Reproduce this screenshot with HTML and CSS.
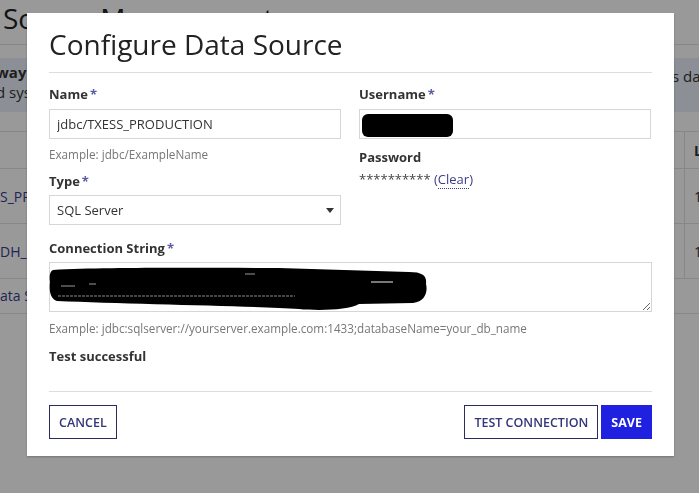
FILE: index.html
```html
<!DOCTYPE html>
<html lang="en">
<head>
    <meta charset="UTF-8">
    <meta name="viewport" content="width=device-width, initial-scale=1.0">
    <title>Source Management</title>
    <link rel="stylesheet" href="styles.css">
</head>
<body>
    <div class="page">
        <h1 class="page-title">Source Management</h1>
        <div class="banner">
            <div class="banner-left">
                <div class="banner-line"><b>way to manage connections</b></div>
                <div class="banner-line">d systems used by reports</div>
            </div>
            <div class="banner-right">s database</div>
        </div>
        <div class="bg-table">
            <div class="bg-row bg-head">
                <div class="bg-cell"></div>
                <div class="bg-cell bg-side">Last</div>
            </div>
            <div class="bg-row">
                <div class="bg-cell bg-link">S_PRODUCTION</div>
                <div class="bg-cell bg-side">12/01</div>
            </div>
            <div class="bg-row">
                <div class="bg-cell bg-link">DH_PROD</div>
                <div class="bg-cell bg-side">11/14</div>
            </div>
        </div>
        <div class="bg-add">ata Source</div>
    </div>

    <div class="overlay">
        <div class="modal">
            <h2 class="modal-title">Configure Data Source</h2>

            <div class="form">
                <div class="form-cols">
                    <div class="col">
                        <label class="label">Name<span class="req">*</span></label>
                        <input class="field" type="text" value="jdbc/TXESS_PRODUCTION">
                        <div class="hint">Example: jdbc/ExampleName</div>

                        <label class="label label-gap">Type<span class="req">*</span></label>
                        <div class="select-wrap">
                            <select class="field select">
                                <option>SQL Server</option>
                            </select>
                        </div>
                    </div>
                    <div class="col">
                        <label class="label">Username<span class="req">*</span></label>
                        <div class="redact-wrap">
                            <input class="field" type="text" value="">
                            <div class="blob-user"></div>
                        </div>

                        <div class="label pw-label">Password</div>
                        <div class="pw-value">********** <span class="clear-link">(<span class="dotted">Clear</span>)</span></div>
                    </div>
                </div>

                <label class="label conn-label">Connection String<span class="req">*</span></label>
                <div class="redact-wrap">
                    <textarea class="field textarea"></textarea>
                    <svg class="blob-conn" width="380" height="48" viewBox="0 0 380 48">
                        <path d="M4 4 C60 1 150 2 230 2 L360 6 C374 6 378 10 377 18 C379 26 376 36 364 37 L310 38 C300 44 270 45 250 43 C200 40 80 38 8 35 C1 33 0 24 1 16 C0 10 1 5 4 4 Z" fill="#000"/>
                        <path d="M9 30 L246 30" stroke="#8a8a8a" stroke-width="1" stroke-dasharray="3 1"/>
                        <path d="M12 20 L26 20 M40 18 L47 18 M196 8 L206 8" stroke="#9a9a9a" stroke-width="1.2"/>
                        <path d="M322 16 L344 16" stroke="#777" stroke-width="2"/>
                    </svg>
                </div>
                <div class="hint">Example: jdbc:sqlserver://yourserver.example.com:1433;databaseName=your_db_name</div>

                <div class="status">Test successful</div>
            </div>

            <div class="modal-footer">
                <button class="btn btn-outline">CANCEL</button>
                <div class="spacer"></div>
                <button class="btn btn-outline">TEST CONNECTION</button>
                <button class="btn btn-primary">SAVE</button>
            </div>
        </div>
    </div>
</body>
</html>
```

FILE: styles.css
```css
body {
    margin: 0;
    font-family: 'Open Sans', 'Noto Sans', sans-serif;
    color: #333;
    background-color: white;
    overflow: hidden;
}

/* page behind the dialog */
.page {
    width: 699px;
    height: 493px;
    overflow: hidden;
}
.page-title {
    margin: 0;
    padding: 1px 3px 9px;
    font-size: 28px;
    line-height: 34px;
    font-weight: 400;
    color: #222;
    border-bottom: 1px solid #e2e2e2;
}
.banner {
    display: flex;
    margin-top: 13px;
    padding: 4px 0 10px;
    background-color: #eaf0fa;
    font-size: 15px;
}
.banner-left {
    flex: none;
    width: 676px;
    margin-left: -4px;
    white-space: nowrap;
}
.banner-line {
    line-height: 20px;
}
.banner-right {
    padding-top: 4px;
    white-space: nowrap;
}
.bg-table {
    margin-top: 19px;
    border-top: 1px solid #e2e2e2;
}
.bg-row {
    display: grid;
    grid-template-columns: 684px 1fr;
    height: 54px;
    border-bottom: 1px solid #e2e2e2;
    font-size: 14px;
}
.bg-head {
    height: 36px;
    font-weight: 700;
}
.bg-cell {
    display: flex;
    align-items: center;
    white-space: nowrap;
    overflow: hidden;
}
.bg-side {
    padding-left: 9px;
    border-left: 1px solid #e2e2e2;
}
.bg-link {
    color: #3b3b8f;
}
.bg-add {
    height: 34px;
    line-height: 34px;
    font-size: 14px;
    color: #3b3b8f;
    border-bottom: 1px solid #e2e2e2;
}

/* dialog */
.overlay {
    position: fixed;
    top: 0;
    left: 0;
    right: 0;
    bottom: 0;
    background-color: rgba(0, 0, 0, 0.4);
}
.modal {
    box-sizing: border-box;
    width: 647px;
    margin: 13px 0 0 27px;
    padding: 12px 22px 17px;
    background-color: white;
    box-shadow: 0 1px 2px rgba(0, 0, 0, 0.25);
}
.modal-title {
    margin: 0;
    padding-bottom: 9px;
    font-size: 28px;
    line-height: 38px;
    font-weight: 400;
    color: #222;
    border-bottom: 1px solid #ddd;
}
.form {
    padding-top: 12px;
}
.form-cols {
    display: grid;
    grid-template-columns: 292px 292px;
    column-gap: 18px;
}
.col {
    display: flex;
    flex-direction: column;
}
.label {
    display: block;
    margin-bottom: 6px;
    font-size: 13px;
    line-height: 18px;
    font-weight: 700;
    color: #333;
}
.req {
    margin-left: 2px;
    color: #5a5aa6;
}
.label-gap {
    margin-top: 10px;
    margin-bottom: 5px;
}
.field {
    box-sizing: border-box;
    display: block;
    width: 100%;
    height: 30px;
    margin: 0;
    padding: 0 7px;
    border: 1px solid #d6d6d6;
    border-radius: 0;
    background-color: white;
    font-family: inherit;
    font-size: 13px;
    color: #333;
    outline: none;
}
.hint {
    margin-top: 7px;
    font-size: 11.7px;
    line-height: 16px;
    color: #777;
}
.select-wrap {
    position: relative;
}
.select {
    appearance: none;
    -webkit-appearance: none;
}
.select-wrap::after {
    content: "";
    position: absolute;
    right: 7px;
    top: 13px;
    border-left: 4px solid transparent;
    border-right: 4px solid transparent;
    border-top: 5px solid #333;
}
.redact-wrap {
    position: relative;
}
.blob-user {
    position: absolute;
    left: 3px;
    top: 5px;
    width: 91px;
    height: 23px;
    background-color: #000;
    border-radius: 6px;
}
.pw-label {
    margin-top: 9px;
    margin-bottom: 4px;
}
.pw-value {
    font-size: 13px;
    line-height: 18px;
    color: #444;
}
.clear-link {
    color: #3b3b86;
}
.dotted {
    border-bottom: 1px dotted #3b3b86;
}
.conn-label {
    margin-top: 14px;
    margin-bottom: 5px;
}
.textarea {
    height: 50px;
    padding: 6px 7px;
    resize: vertical;
}
.blob-conn {
    position: absolute;
    left: 0;
    top: 4px;
}
.redact-wrap + .hint {
    margin-top: 8px;
}
.status {
    margin-top: 11px;
    font-size: 13px;
    line-height: 18px;
    font-weight: 700;
    color: #333;
}
.modal-footer {
    display: flex;
    gap: 3px;
    margin-top: 26px;
    padding-top: 13px;
    border-top: 1px solid #ddd;
}
.spacer {
    flex: 1;
}
.btn {
    height: 34px;
    padding: 0 9px;
    font-family: inherit;
    font-size: 12.5px;
    font-weight: 600;
    border-radius: 0;
    cursor: pointer;
}
.btn-outline {
    background-color: white;
    color: #35357a;
    border: 1px solid #2b2b5e;
}
.btn-primary {
    background-color: #2020e0;
    color: white;
    border: 1px solid #2020e0;
    font-weight: 700;
}
```
